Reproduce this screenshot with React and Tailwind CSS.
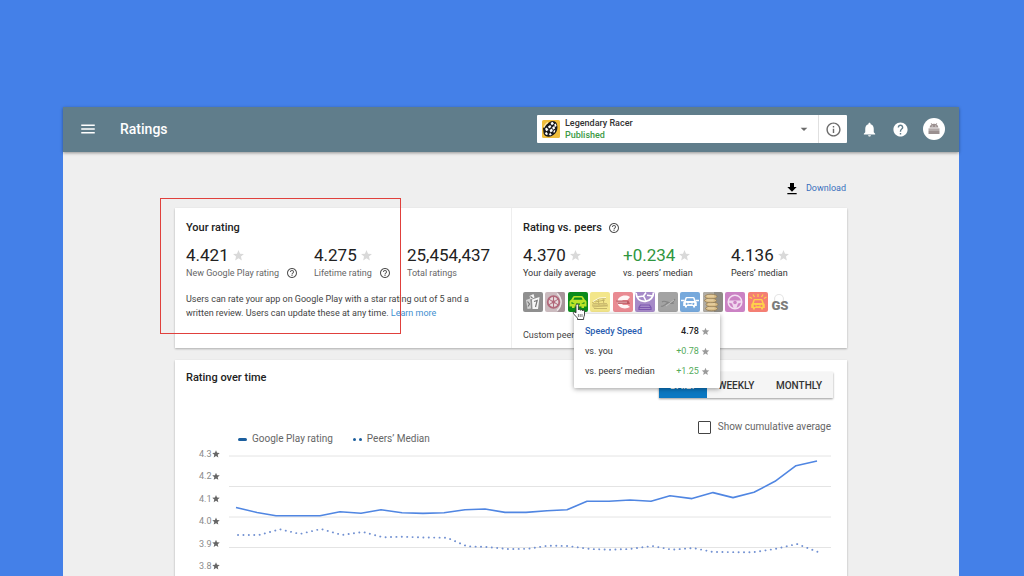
import React from "react";
import {
  MdMenu,
  MdArrowDropDown,
  MdInfoOutline,
  MdNotifications,
  MdHelp,
  MdFileDownload,
  MdHelpOutline,
  MdStar,
} from "react-icons/md";

const CAR =
  "M4.2 9.2 5.4 5.7C5.6 5.2 6 4.9 6.5 4.9h7c.5 0 .9.3 1.1.8l1.2 3.5c.6.3 1 .8 1 1.5v3.4h-1.7v1.3h-2v-1.3H6.9v1.3h-2v-1.3H3.2v-3.4c0-.7.4-1.2 1-1.5Zm1.7-.3h8.2l-.9-2.6H6.8l-.9 2.6Zm-.2 3.1a1 1 0 1 0 0-.1Zm6.7 0a1 1 0 1 0 0-.1ZM8.4 11v1.3h3.2V11Z";

function Tile({ fill, children }) {
  return (
    <svg viewBox="0 0 20 20" className="block size-5" aria-hidden="true">
      <rect width="20" height="20" rx="2" fill={fill} />
      {children}
    </svg>
  );
}

const PEERS = [
  {
    name: "Flag Derby",
    art: (
      <Tile fill="#8f8f8f">
        <path d="m3 8 4-1.500.500 3L8 16.500 4.500 17Z" fill="#fff" opacity=".6" />
        <path d="m6.500 4 4-2 1 3.500-4 2Z" fill="#fff" opacity=".9" />
        <path d="M9 7.500 16.500 5 15 17H9.500Z" fill="#fff" opacity=".92" />
        <path d="m11 9.500 3.200-1-1.700 6.500M7.500 4.500l2 1.500M4.500 9.500 6.500 12 5 14.500" stroke="#777" strokeWidth="1.200" fill="none" />
      </Tile>
    ),
  },
  {
    name: "Wheel Works",
    art: (
      <Tile fill="#cbbbbf">
        <path d="M12 0h6a2 2 0 0 1 2 2v16a2 2 0 0 1-2 2h-6c6-5 6-15 0-20Z" fill="#a8959b" />
        <path d="M12 1.500c5.500 5 5.500 12 0 17" stroke="#efe8ea" strokeWidth="1.200" fill="none" />
        <circle cx="8.500" cy="10" r="5.800" fill="#e4d8db" stroke="#b2687a" strokeWidth="1.800" />
        <circle cx="8.500" cy="10" r="1.800" fill="#b2687a" />
        <path d="M8.500 4.500v11M3.500 7l10 6M13.500 7l-10 6" stroke="#b2687a" strokeWidth="1" />
      </Tile>
    ),
  },
  {
    name: "Speedy Speed",
    art: (
      <Tile fill="#0a8a1c">
        <path
          d="M3 8 5 4.800C5.300 4.300 5.800 4 6.400 4h7.200c.6 0 1.100.3 1.400.8L17 8c1 .4 1.500 1 1.500 2v4.500H16V16h-2.500v-1.500h-7V16H4v-1.500H1.500V10c0-1 .5-1.600 1.500-2Zm2.300-.3h9.400l-1.200-2.200h-7ZM3.500 10v1.800h3.300Zm13 0v1.800h-3.300ZM8 11.500v1.300h4v-1.300Z"
          fill="#b9e22a"
          fillRule="evenodd"
        />
      </Tile>
    ),
  },
  {
    name: "Taxi Sketch",
    art: (
      <Tile fill="#f3e68a">
        <path d="M2 11 8 7l8-1M2 13h16M3 15l14-1.500M5 10l10-2M4 16.500h13M8 7l1 6M13 6.500l1 6" stroke="#b9a860" strokeWidth=".8" fill="none" />
        <path d="M3 9.500 9 6l7-.5" stroke="#fffbe0" strokeWidth="1" fill="none" />
        <path d="M2 14h16M3 11.500h14" stroke="#cdbc70" strokeWidth="1" />
      </Tile>
    ),
  },
  {
    name: "King Racing",
    art: (
      <Tile fill="#e98a92">
        <path d="M17 5C12 2 4.500 4 4.500 10S12 18 17 15l-2.500-2H9.500V8h5Z" fill="#fff" opacity=".92" />
        <path d="M3 8.500h12.500l1.500 3.500H5Z" fill="#c05862" />
        <path d="M5 9.500v1.800M7 9.500v1.800M9 9.500v1.800M11 9.500v1.800M13 9.500v1.800" stroke="#fff" strokeWidth=".7" />
      </Tile>
    ),
  },
  {
    name: "Steer Master",
    art: (
      <Tile fill="#a68ac8">
        <path d="M1 1c.8 6 4.500 8.800 9.500 8.300S18.500 5 18.500.5" stroke="#fff" strokeWidth="1.800" fill="none" />
        <path d="m2 5 6.500-1L11 .5M8.500 4l2.500 5M12 3.200 18 4" stroke="#fff" strokeWidth="1.600" fill="none" />
        <path d="M4.500 15.500h11M5.500 13h9l1.500 2.500v2H4v-2Z" stroke="#7d58b0" strokeWidth="1.200" fill="none" />
      </Tile>
    ),
  },
  {
    name: "Track Line",
    art: (
      <Tile fill="#a3a3a3">
        <path d="M3 14c3 2 5-4 8-3s4-1 6-4M4 10c3-3 7 3 12 1" stroke="#858585" strokeWidth="1.200" fill="none" />
        <path d="m8 14 8-6" stroke="#c4c4c4" strokeWidth=".9" />
      </Tile>
    ),
  },
  {
    name: "Blue Coupe",
    art: (
      <Tile fill="#77a9dc">
        <path d={CAR} fill="#fff" fillRule="evenodd" />
        <path d="M1 8.500h3.500M15.500 8.500H19" stroke="#fff" strokeWidth="1.300" />
      </Tile>
    ),
  },
  {
    name: "Coin Stack",
    art: (
      <Tile fill="#8e8b85">
        <path d="M0 2a2 2 0 0 1 2-2h9v20H2a2 2 0 0 1-2-2Z" fill="#b0aca4" />
        <g fill="#d9bd88" stroke="#8b744d" strokeWidth=".7">
          <ellipse cx="8.500" cy="16.500" rx="6" ry="2.300" />
          <ellipse cx="9" cy="12.500" rx="6" ry="2.300" />
          <ellipse cx="7.500" cy="8.500" rx="6" ry="2.300" />
          <ellipse cx="8" cy="4.500" rx="6" ry="2.300" />
        </g>
        <path d="M4 4h7M3.500 8h7M5 12h7M4.500 16h7" stroke="#f0dcb4" strokeWidth=".9" />
      </Tile>
    ),
  },
  {
    name: "Pink Wheel",
    art: (
      <Tile fill="#cb82c4">
        <circle cx="10" cy="10" r="6.800" fill="none" stroke="#f3dff1" strokeWidth="1.500" />
        <path d="M4 8.500h12v2.200l-3 .8-1.500 4.500h-3L7 11.500l-3-.8Z" fill="#f0d6ee" />
        <circle cx="10" cy="10.500" r="1.800" fill="#cb82c4" />
      </Tile>
    ),
  },
  {
    name: "Sunrise Drive",
    art: (
      <Tile fill="#f47f74">
        <path transform="translate(0 2)" d={CAR} fill="#ffd14a" fillRule="evenodd" />
        <path d="M10 2v3M5 2.500 6.500 5M15 2.500 13.500 5M1.500 5 4 6.500M18.500 5 16 6.500" stroke="#ffd14a" strokeWidth="1.200" />
      </Tile>
    ),
  },
  {
    name: "GS",
    art: (
      <span className="relative flex h-5 w-5 items-end justify-center">
        <svg viewBox="0 0 20 20" className="absolute inset-0 size-5" aria-hidden="true">
          <circle cx="9" cy="7" r="4.500" fill="none" stroke="#e6e6e6" strokeWidth="1.200" />
        </svg>
        <span className="relative text-[13px] leading-[13px] font-black text-[#7c7c7c]">GS</span>
      </span>
    ),
  },
];

const RATING = [
  [49, 62.5], [70, 67.5], [89, 70.7], [133, 70.7], [153, 66.8], [174, 68.3], [194, 64.7], [215, 67.7],
  [236, 68.4], [257, 67.7], [278, 64.8], [298, 64], [318, 67.4], [339, 67.4], [360, 65.8], [380, 64.8],
  [400, 56.2], [422, 56.2], [443, 55], [464, 56.2], [483, 50.7], [505, 53.6], [526, 47.6], [546, 52.6],
  [567, 47.3], [588, 36.3], [609, 20.7], [630, 16],
];
const MEDIAN = [
  [51, 90], [72, 90], [93, 84.3], [113, 89], [134, 84], [155, 90], [176, 87], [196, 92.3], [216, 91.7],
  [236, 92.5], [260, 92.7], [280, 101.3], [300, 102], [320, 104], [341, 103.8], [361, 100.7], [381, 101],
  [403, 104], [423, 104.7], [443, 104], [465, 101], [485, 104.7], [506, 103], [526, 107], [566, 107.3],
  [588, 104], [610, 99], [631, 107],
];
const TICKS = [
  ["4.3", 9], ["4.2", 31.4], ["4.1", 53.8], ["4.0", 76.2], ["3.9", 98.6], ["3.8", 121],
];

const points = (list) => list.map((p) => p.join(",")).join(" ");

function RatingChart() {
  return (
    <svg viewBox="-1 1 649 149" className="block w-full" role="img" aria-label="Rating over time">
      {[11, 41.5, 72, 102.5, 133].map((y) => (
        <line key={y} x1="42" x2="644" y1={y} y2={y} stroke="#e4e4e4" strokeWidth="1" />
      ))}
      {TICKS.map(([label, y]) => (
        <g key={label}>
          <text x="24.5" y={y + 3} textAnchor="end" fontSize="9" fill="#8a8a8a">
            {label}
          </text>
          <MdStar x="24.5" y={y - 4.5} size={9} color="#666" />
        </g>
      ))}
      <polyline points={points(RATING)} fill="none" stroke="#5086e2" strokeWidth="1.6" strokeLinejoin="round" />
      <polyline
        points={points(MEDIAN)}
        fill="none"
        stroke="#7291d2"
        strokeWidth="1.9"
        strokeLinecap="round"
        strokeDasharray="0.1 5.300"
      />
    </svg>
  );
}

function Help({ label }) {
  return (
    <button type="button" aria-label={label} className="shrink-0 text-[#555]">
      <MdHelpOutline size={12} />
    </button>
  );
}

function Stat({ value, label, star, help, green, dark }) {
  return (
    <div className="whitespace-nowrap">
      <div className={"flex items-center gap-[3px] text-[17px] leading-5 " + (green ? "text-[#2f9640]" : "text-[#222]")}>
        {value}
        {star && <MdStar size={13} className="text-[#d9d9d9]" />}
      </div>
      <div className={"mt-px flex items-center gap-[7px] text-[9px] leading-[14px] " + (dark ? "text-[#333]" : "text-[#666]")}>
        {label}
        {help && <Help label={"About " + label} />}
      </div>
    </div>
  );
}

function PeerCard() {
  const rows = [
    ["vs. you", "+0.78"],
    ["vs. peers’ median", "+1.25"],
  ];
  return (
    <div
      role="tooltip"
      className="absolute top-[22px] left-[6px] z-20 w-[146px] rounded-[1px] bg-white py-[7px] pr-2.5 pl-[11px] text-[9px] leading-5 text-[#333] shadow-[0_1px_5px_rgba(0,0,0,0.4)]"
    >
      <div className="flex items-center font-medium">
        <span className="flex-1 text-[#2a5db0]">Speedy Speed</span>
        <span className="text-[#222]">4.78</span>
        <MdStar size={9} className="ml-0.5 text-[#9a9a9a]" />
      </div>
      {rows.map(([label, value]) => (
        <div key={label} className="flex items-center">
          <span className="flex-1">{label}</span>
          <span className="text-[#55ab5c]">{value}</span>
          <MdStar size={9} className="ml-0.5 text-[#9a9a9a]" />
        </div>
      ))}
    </div>
  );
}

function Pointer() {
  return (
    <svg viewBox="0 0 14 18" className="absolute top-[11px] left-1 z-30 h-[18px] w-3.5" aria-hidden="true">
      <path
        d="M4 9.800V2.200a1.200 1.200 0 0 1 2.400 0V7a1.100 1.100 0 0 1 2.100.3 1.100 1.100 0 0 1 2.100.5 1 1 0 0 1 1.900.6v3.600c0 1.300-.9 2-.9 3v1.500H5.500V15.200C4.700 14 2.600 12.300 1.400 10.400c-.6-1 .6-1.900 1.500-1.200Z"
        fill="#fff"
        stroke="#333"
        strokeWidth=".9"
        strokeLinejoin="round"
      />
      <path d="M6.400 11v3M8.200 11v3M10 11v3" stroke="#444" strokeWidth=".7" />
    </svg>
  );
}

function AppIcon() {
  return (
    <svg viewBox="0 0 18 18" className="size-[18px] shrink-0" aria-hidden="true">
      <rect width="18" height="18" rx="1.500" fill="#f0bd3c" />
      <path d="M1 8.500C2 6 5 4.500 8 1.800 10 .3 13.500.8 14.500 3c1 2 1.500 5.500 0 8.500-1.300 2.600-4.500 5-7.500 5.300-2.200.2-4.500-.8-5.300-3Z" fill="#17171c" />
      <path
        d="m8.500 3 2-1.200 1.500 2-2.200 1.400ZM12.200 4.500l1.600-1 .8 2.500-1.600 1ZM6 6.500l2.200-1.500 1.200 2-2.400 1.500ZM10.200 7.300l2.100-1.400.8 2.500-2.100 1.400ZM3 8.800l1.800-1.300L6.500 10l-2.300 1.300ZM7.600 10l2.300-1.400 1 2.500-2.400 1.400ZM11.400 11l1.900-1.300-.4 2.400-1.200 1ZM2.800 13l1.800-1 1.500 2.200-2 .8ZM6.700 14l1.900-1 1.200 1.700-1.800.9Z"
        fill="#fff"
      />
      <path d="M2 7.500c.8-2.500 2.200-4.300 4-5" stroke="#f9e8b4" strokeWidth="1.200" fill="none" />
    </svg>
  );
}

function TopBar() {
  return (
    <header className="relative z-10 flex h-[45px] items-center bg-[#607d8b] pr-3.5 pb-px pl-4 text-white shadow-[0_1px_3px_rgba(0,0,0,0.4)]">
      <button type="button" aria-label="Menu">
        <MdMenu size={18} />
      </button>
      <h1 className="ml-[23px] flex-1 text-[14px] font-medium">Ratings</h1>
      <div className="flex items-center gap-3.5">
        <div className="flex h-7 w-[310px] rounded-[1px] bg-white">
          <button type="button" aria-haspopup="listbox" className="flex flex-1 items-center pr-1.5 pl-[5px] text-left">
            <AppIcon />
            <span className="ml-[5px] flex-1 text-[9px] leading-3 font-medium">
              <span className="block text-[#333]">Legendary Racer</span>
              <span className="block text-[#3c9a45]">Published</span>
            </span>
            <MdArrowDropDown size={16} className="text-[#6b6b6b]" />
          </button>
          <button
            type="button"
            aria-label="App information"
            className="flex w-[29px] items-center justify-center border-l border-[#e0e0e0] text-[#6b6b6b]"
          >
            <MdInfoOutline size={17} />
          </button>
        </div>
        <button type="button" aria-label="Notifications">
          <MdNotifications size={17} />
        </button>
        <button type="button" aria-label="Help">
          <MdHelp size={17} />
        </button>
        <button
          type="button"
          aria-label="Account"
          className="flex size-[22px] items-center justify-center rounded-full bg-white text-[#9b9090]"
        >
          <svg viewBox="0 0 14 14" className="size-3.5" aria-hidden="true">
            <path
              d="M2.600 5.600c.1-1.500.9-2.600 1.900-3.200L3.700 1.300l.5-.3.900 1.100a5.500 5.500 0 0 1 3.800 0L9.800 1l.5.3-.8 1.100c1 .6 1.800 1.700 1.900 3.200ZM1.500 6.400h11v1.300h-11ZM1.500 8.300h11V12h-11Z"
              fill="currentColor"
            />
            <circle cx="5.200" cy="4" r=".5" fill="#fff" />
            <circle cx="8.800" cy="4" r=".5" fill="#fff" />
          </svg>
        </button>
      </div>
    </header>
  );
}

const CARD = "bg-white shadow-[0_1px_2px_rgba(0,0,0,0.28)]";

function Summary() {
  return (
    <section className={"relative mt-3 grid grid-cols-2 " + CARD}>
      <div className="pt-[13px] pl-[11px]">
        <h2 className="text-[11px] leading-[14px] font-medium text-[#222]">Your rating</h2>
        <div className="mt-2.5 grid grid-cols-[128px_93px_auto]">
          <Stat value="4.421" label="New Google Play rating" star help />
          <Stat value="4.275" label="Lifetime rating" star help />
          <Stat value="25,454,437" label="Total ratings" />
        </div>
        <p className="mt-3 max-w-[300px] text-[9px] leading-[14px] text-[#444]">
          Users can rate your app on Google Play with a star rating out of 5 and a written review. Users can update
          these at any time.{" "}
          <a href="#learn-more" className="text-[#3f8fd0]">
            Learn more
          </a>
        </p>
      </div>
      <div className="border-l border-[#eee] pt-[13px] pb-1.5 pl-[11px]">
        <div className="flex items-center gap-1.5">
          <h2 className="text-[11px] leading-[14px] font-medium text-[#222]">Rating vs. peers</h2>
          <Help label="About Rating vs. peers" />
        </div>
        <div className="mt-2.5 grid grid-cols-[100px_108px_auto]">
          <Stat value="4.370" label="Your daily average" star dark />
          <Stat value="+0.234" label="vs. peers’ median" star green dark />
          <Stat value="4.136" label="Peers’ median" star dark />
        </div>
        <div className="mt-3 flex w-[267px] justify-between">
          {PEERS.map((peer) => (
            <div key={peer.name} className="relative">
              <button type="button" aria-label={peer.name} className="block">
                {peer.art}
              </button>
              {peer.name === "Speedy Speed" && (
                <>
                  <PeerCard />
                  <Pointer />
                </>
              )}
            </div>
          ))}
        </div>
        <p className="mt-4 text-[9px] leading-[14px] text-[#444]">Custom peer</p>
      </div>
      <div className="pointer-events-none absolute -top-2.5 -left-[15px] z-10 h-[136px] w-[241px] border border-[#e0403c]" />
    </section>
  );
}

function Timeline() {
  return (
    <section className={"mt-3 pt-[11px] pr-3 pl-[11px] " + CARD}>
      <div className="flex items-start justify-between pr-0.5">
        <h2 className="text-[11px] leading-[14px] font-medium text-[#222]">Rating over time</h2>
        <div className="mt-px flex h-[26px] bg-[#f5f5f5] text-[10px] font-medium text-[#333] shadow-[0_1px_2px_rgba(0,0,0,0.4)]">
          <button type="button" className="w-12 bg-[#0b78c2] text-white">DAILY</button>
          <button type="button" className="w-[58px]">WEEKLY</button>
          <button type="button" className="w-[68px]">MONTHLY</button>
        </div>
      </div>
      <div className="mt-[22px] flex items-start justify-between pr-1 pl-[52px] text-[10px] leading-[14px] text-[#666]">
        <div className="flex gap-5 pt-3">
          <span className="flex items-center gap-[5px]">
            <span className="h-[3px] w-[9px] rounded-full bg-[#1c5f9e]" />
            Google Play rating
          </span>
          <span className="flex items-center gap-[5px]">
            <span className="flex gap-[3px]">
              <span className="size-[3px] rounded-full bg-[#1c5f9e]" />
              <span className="size-[3px] rounded-full bg-[#1c5f9e]" />
            </span>
            Peers’ Median
          </span>
        </div>
        <label className="flex items-center gap-[7px]">
          <input type="checkbox" className="size-[13px] appearance-none rounded-[1px] border border-[#444] bg-white" />
          Show cumulative average
        </label>
      </div>
      <RatingChart />
    </section>
  );
}

export default function App() {
  return (
    <div className="h-screen overflow-hidden bg-[#4480e8] pt-[107px] pr-[65px] pl-[63px] font-['Roboto',sans-serif]">
      <div className="min-h-full bg-[#efefef]">
        <TopBar />
        <main className="px-28 pt-[30px]">
          <div className="flex justify-end pr-px">
            <a href="#download" className="flex h-3.5 items-center gap-1.5 text-[9px] text-[#3a6fbd]">
              <MdFileDownload size={16} className="text-black" />
              Download
            </a>
          </div>
          <Summary />
          <Timeline />
        </main>
      </div>
    </div>
  );
}
